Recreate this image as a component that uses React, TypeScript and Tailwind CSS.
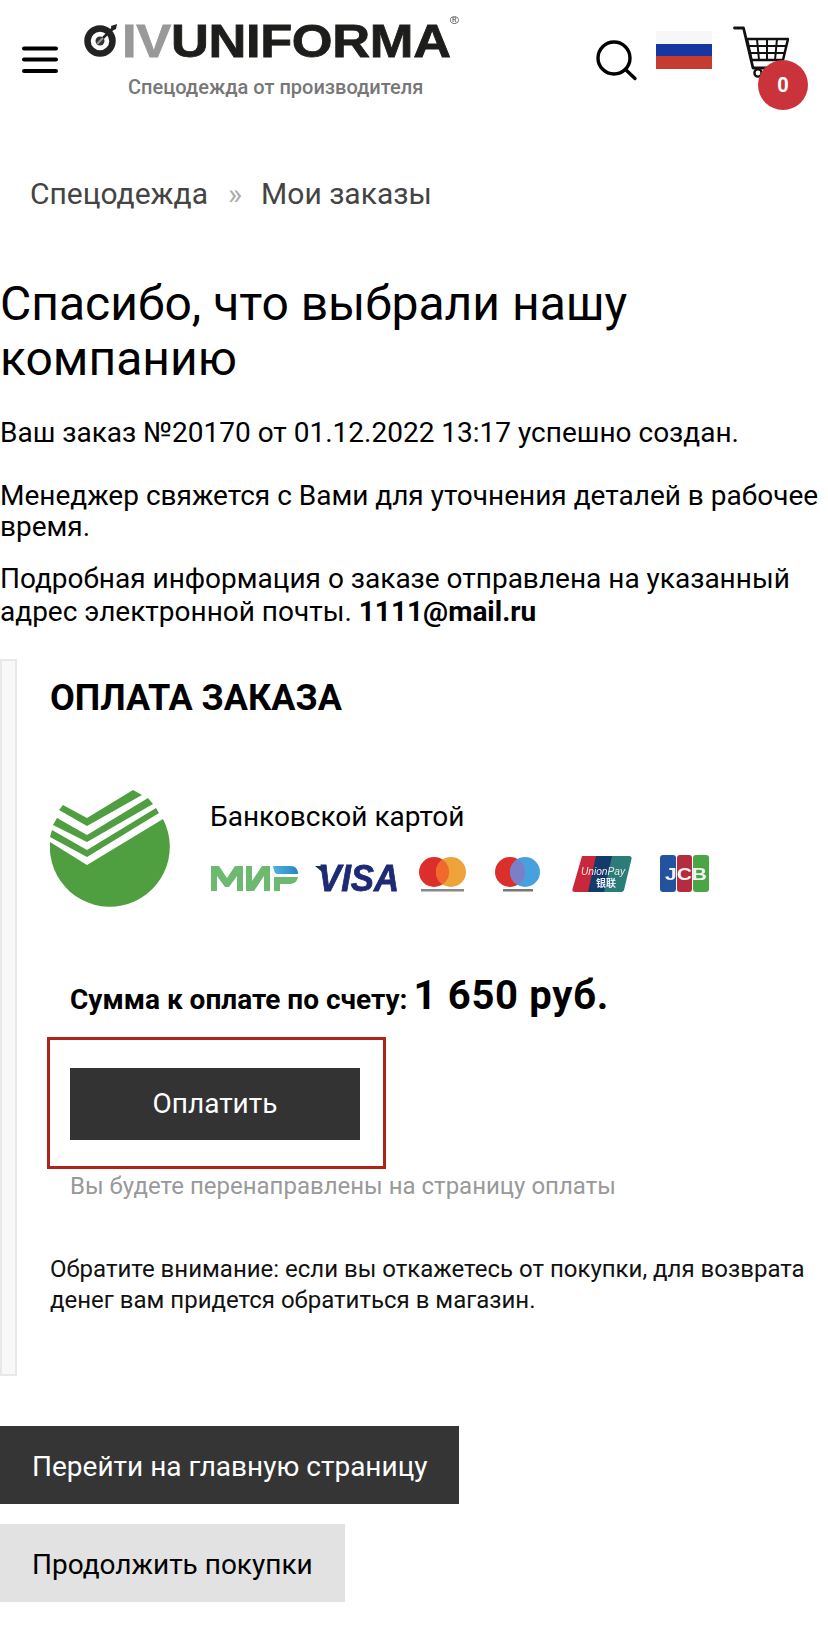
import React from "react";

const Hamburger = () => (
  <svg width="36" height="28" viewBox="0 0 36 28" className="shrink-0">
    <path d="M2 2.500H34M2 13.500H34M2 25H34" stroke="#000" strokeWidth="4" strokeLinecap="round" />
  </svg>
);

const Target = () => (
  <svg width="34" height="34" viewBox="0 0 34 34" className="shrink-0">
    <circle cx="16" cy="18" r="12.500" fill="none" stroke="#222" strokeWidth="6.500" />
    <circle cx="16" cy="18" r="4.500" fill="#333" />
    <path d="M13 21L19 15" stroke="#999" strokeWidth="2" />
    <path d="M19 15L30 4" stroke="#222" strokeWidth="2.500" />
    <path d="M27 3l6 -2 -1 5 -4 2z" fill="#222" />
  </svg>
);

const Search = () => (
  <svg width="42" height="42" viewBox="0 0 42 42" className="shrink-0">
    <circle cx="18" cy="18" r="16" fill="none" stroke="#000" strokeWidth="3.400" />
    <path d="M29.500 29.500L39 38.500" stroke="#000" strokeWidth="3.400" strokeLinecap="round" />
  </svg>
);

const Flag = () => (
  <div className="flex flex-col w-[56px] h-[38px] shrink-0">
    <div className="h-[13px] bg-[#f7f7f7]" />
    <div className="h-[12px] bg-[#1736a0]" />
    <div className="h-[13px] bg-[#c63b2f]" />
  </div>
);

const Cart = () => (
  <svg width="56" height="54" viewBox="0 0 56 54">
    <path d="M1.500 3H10.500L20 43H50" fill="none" stroke="#111" strokeWidth="2.800" strokeLinecap="round" strokeLinejoin="round" />
    <path d="M14 14H55L50 35H18.500Z" fill="none" stroke="#111" strokeWidth="2.500" strokeLinejoin="round" />
    <path d="M15.500 21H53M17 28H51.500M24 14L26 35M34 14V35M44 14L42 35" stroke="#111" strokeWidth="2" />
    <circle cx="25" cy="48" r="3.600" fill="#fff" stroke="#111" strokeWidth="2.400" />
  </svg>
);

const Sber = () => (
  <svg width="120" height="120" viewBox="0 0 120 120" className="shrink-0">
    <path d="M113 29 A60 60 0 1 1 0 52 L37 75 Z" fill="#4f9e3f" />
    <path d="M2 40 L37 60 L106 18 L109 23 L37 67 L0 47 Z" fill="#4f9e3f" />
    <path d="M7 28 L37 45 L98 8 L103 14 L37 52 L3 35 Z" fill="#4f9e3f" />
    <path d="M13 15 L37 28 L83 0 L92 5 L37 36 L9 20 Z" fill="#4f9e3f" />
  </svg>
);

const CardLogos = () => (
  <div className="flex items-start h-[40px]">
    <svg width="88" height="28" viewBox="0 0 88 28" className="shrink-0 ml-[1px] mt-[10px] blur-[0.4px]">
      <defs>
        <linearGradient id="mir" x1="0" x2="1">
          <stop offset="0" stopColor="#4fb3e0" />
          <stop offset="1" stopColor="#2a84c8" />
        </linearGradient>
      </defs>
      <path d="M0 26V1H8L16 13L24 1H32V26H26V11L18 22H14L6 11V26Z" fill="#6cb96f" />
      <path d="M35 26V1H41V16L51 1H59V26H53V11L43 26Z" fill="#6cb96f" />
      <path d="M62 1H80C85 1 87 5 87 9H66C64 9 63 6 62 1Z" fill="url(#mir)" />
      <path d="M63 12H87C86 17 83 19 78 19H69V26H63Z" fill="#6cb96f" />
    </svg>
    <svg width="85" height="30" viewBox="0 0 85 30" className="shrink-0 ml-[16px] mt-[9px] blur-[0.4px]">
      <text x="3" y="27" fontFamily="'Liberation Sans', sans-serif" fontStyle="italic" fontWeight="700" fontSize="36" textLength="81" lengthAdjust="spacingAndGlyphs" fill="#1d2a74" stroke="#1d2a74" strokeWidth="0.800">VISA</text>
      <path d="M0 2H8L12 12Z" fill="#1d2a74" />
    </svg>
    <svg width="50" height="38" viewBox="0 0 50 38" className="shrink-0 ml-[18px] mt-[2px] blur-[0.4px]">
      <circle cx="16" cy="15" r="15" fill="#dc2e2b" />
      <circle cx="33" cy="15" r="15" fill="#eea33a" />
      <path d="M24.500 2.500A15 15 0 0 1 24.500 27.500A15 15 0 0 1 24.500 2.500Z" fill="#ef6a2c" />
      <rect x="3" y="32" width="43" height="2.500" fill="#888" />
    </svg>
    <svg width="48" height="38" viewBox="0 0 48 38" className="shrink-0 ml-[27px] mt-[2px] blur-[0.4px]">
      <circle cx="15" cy="15" r="15" fill="#dc2e2b" />
      <circle cx="30" cy="15" r="15" fill="#46a1df" />
      <path d="M22.500 2A15 15 0 0 1 22.500 28A15 15 0 0 1 22.500 2Z" fill="#7c7fc6" />
      <rect x="8" y="32" width="30" height="2.500" fill="#777" />
    </svg>
    <svg width="60" height="38" viewBox="0 0 60 38" className="shrink-0 ml-[29px] blur-[0.4px]">
      <path d="M10 1H28L20 37H3C1 37 0 36 0.500 34Z" fill="#c9283a" />
      <path d="M24 1H44L36 37H16Z" fill="#123a6b" />
      <path d="M40 1H57C59 1 60 2 59.500 4L52 35C51.500 36.500 50 37 49 37H32Z" fill="#2b7b77" />
      <text x="9" y="20" fontFamily="'Liberation Sans', sans-serif" fontStyle="italic" fontSize="11" fill="#f2e9ea" textLength="44" lengthAdjust="spacingAndGlyphs">UnionPay</text>
      <text x="24" y="32" fontFamily="'Noto Sans CJK SC', sans-serif" fontWeight="700" fontSize="10" fill="#eef">银联</text>
    </svg>
    <svg width="50" height="38" viewBox="0 0 50 38" className="shrink-0 ml-[28px] blur-[0.4px]">
      <rect x="0" y="0" width="16" height="37" rx="3" fill="#23539f" />
      <rect x="17" y="0" width="15" height="37" rx="3" fill="#b52b3f" />
      <rect x="33" y="0" width="16" height="37" rx="3" fill="#4aa544" />
      <text x="5" y="25" fontFamily="'Liberation Sans', sans-serif" fontWeight="700" fontSize="17" textLength="42" lengthAdjust="spacingAndGlyphs" fill="#f3f3f3">JCB</text>
    </svg>
  </div>
);

export default function App() {
  return (
    <div className="w-[828px] h-[1640px] bg-white text-black overflow-hidden font-['Roboto',sans-serif]">
      <header className="flex h-[120px] items-start">
        <div className="ml-[22px] mt-[46px]"><Hamburger /></div>
        <div className="ml-[26px] mt-[18px] w-[370px] shrink-0">
          <div className="flex items-end h-[46px]">
            <div className="mb-[7px]"><Target /></div>
            <div className="relative ml-[4px] origin-left scale-x-[1.14] font-['Liberation_Sans',sans-serif] font-bold text-[46px] leading-[46px] tracking-[-0.3px] whitespace-nowrap [-webkit-text-stroke:0.8px_currentColor]">
              <span className="text-[#999999]">IV</span>
              <span className="text-[#1d1d1b]">UNIFORMA</span>
              <span className="absolute right-[-7px] top-[-4px] text-[11px] leading-[12px] font-normal text-[#444] [-webkit-text-stroke:0px]">®</span>
            </div>
          </div>
          <div className="mt-[11px] ml-[44px] text-[20px] leading-[24px] font-medium text-[#777777] whitespace-nowrap">Спецодежда от производителя</div>
        </div>
        <div className="ml-[142px] mt-[40px]"><Search /></div>
        <div className="ml-[18px] mt-[31px]"><Flag /></div>
        <div className="relative ml-[21px] mt-[25px] w-[56px] h-[54px]">
          <Cart />
          <div className="absolute left-[25px] top-[35px] w-[50px] h-[50px] rounded-full bg-[#cb333b] text-white font-bold text-[20px] flex items-center justify-center">0</div>
        </div>
      </header>

      <nav className="mt-[56px] ml-[30px] flex items-center text-[30px] leading-[36px] text-[#444444] whitespace-nowrap">
        <span>Спецодежда</span>
        <span className="ml-[20px] text-[#aaaaaa]">»</span>
        <span className="ml-[19px]">Мои заказы</span>
      </nav>

      <h1 className="mt-[64px] text-[48px] leading-[55px] font-normal">Спасибо, что выбрали нашу компанию</h1>

      <p className="mt-[31px] text-[28px] leading-[32px]">Ваш заказ №20170 от 01.12.2022 13:17 успешно создан.</p>
      <p className="mt-[31px] text-[28px] leading-[31px]">Менеджер свяжется с Вами для уточнения деталей в рабочее время.</p>
      <p className="mt-[20px] text-[28px] leading-[33px]">Подробная информация о заказе отправлена на указанный адрес электронной почты. <b className="font-bold">1111@mail.ru</b></p>

      <section className="mt-[31px] h-[717px] w-[828px] flex">
        <div className="w-[17px] h-full shrink-0 border-2 border-[#e8e8e8] bg-[#f8f8f8]" />
        <div className="flex-1 pl-[33px] pt-[18px]">
          <h2 className="text-[36px] leading-[42px] font-bold">ОПЛАТА ЗАКАЗА</h2>
          <div className="mt-[71px] flex">
            <Sber />
            <div className="ml-[40px]">
              <div className="mt-[9px] text-[28px] leading-[36px]">Банковской картой</div>
              <div className="mt-[20px]"><CardLogos /></div>
            </div>
          </div>
          <div className="mt-[61px] ml-[20px] flex items-baseline whitespace-nowrap font-bold">
            <span className="text-[28px] leading-[50px]">Сумма к оплате по счету:</span>
            <span className="ml-[6px] text-[40px] leading-[50px] tracking-[0.7px]">1 650 руб.</span>
          </div>
          <div className="mt-[12px] ml-[-3px] w-[339px] h-[132px] border-[3px] border-[#b02318] pt-[28px] pl-[20px]">
            <div className="w-[290px] h-[72px] bg-[#333333] text-white text-[28px] flex items-center justify-center">Оплатить</div>
          </div>
          <div className="mt-[1px] ml-[20px] text-[24px] leading-[32px] text-[#999999] whitespace-nowrap">Вы будете перенаправлены на страницу оплаты</div>
          <div className="pt-[52px] text-[24px] leading-[31px] text-[#111111] w-[778px]">Обратите внимание: если вы откажетесь от покупки, для возврата денег вам придется обратиться в магазин.</div>
        </div>
      </section>

      <div className="mt-[50px] flex flex-col items-start gap-[20px]">
        <div className="h-[78px] w-[459px] pl-[32px] pt-[3px] bg-[#353535] text-white text-[28px] flex items-center">Перейти на главную страницу</div>
        <div className="h-[78px] w-[345px] pl-[32px] pt-[3px] bg-[#e2e2e2] text-black text-[28px] flex items-center">Продолжить покупки</div>
      </div>
    </div>
  );
}
